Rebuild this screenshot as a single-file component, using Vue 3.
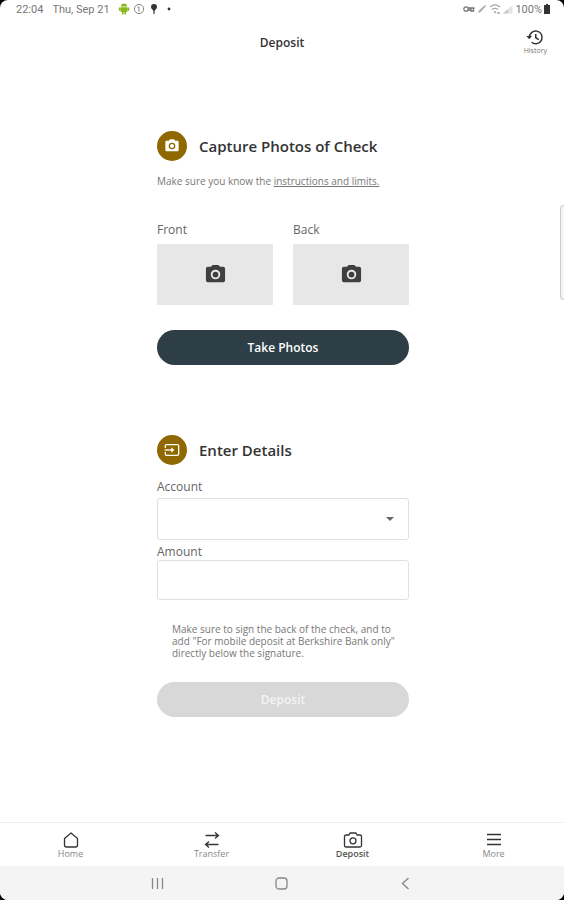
<script setup>
import { ref } from 'vue'

const account = ref('')
const amount = ref('')
const activeTab = ref('Deposit')
const tabs = ['Home', 'Transfer', 'Deposit', 'More']
const sides = ['Front', 'Back']
</script>

<template>
  <div class="screen">
    <div class="status-bar">
      <div class="status-group">
        <span>22:04</span>
        <span class="date">Thu, Sep 21</span>
        <svg class="status-icon" viewBox="0 0 12 12">
          <path d="M3 3.5a3 3 0 0 1 6 0zM2.800 4.200h6.400V9H2.800zM.8 4.400h1.800v3.400H.8zM9.400 4.400h1.800v3.400H9.400zM4 9h1.600v2.400H4zM6.400 9H8v2.400H6.400z" fill="#86b817" />
        </svg>
        <svg class="status-icon" viewBox="0 0 12 12" fill="none" stroke="#888">
          <circle cx="6" cy="6" r="4.600" />
          <path d="M4.500 4H6v4.500" />
        </svg>
        <svg class="status-icon" viewBox="0 0 12 12">
          <path d="M6 1a3 3 0 0 1 3 3c0 2-2 2.500-2.400 4v3H5.400V8C5 6.500 3 6 3 4a3 3 0 0 1 3-3z" fill="#333" />
        </svg>
        <svg class="status-icon" viewBox="0 0 12 12"><circle cx="6" cy="6" r="1.400" fill="#333" /></svg>
      </div>
      <div class="status-group status-right">
        <svg class="status-icon" viewBox="0 0 12 12" fill="none" stroke="#777" stroke-width="1.300">
          <circle cx="3" cy="6" r="2.200" />
          <path d="M5 5h6.500M5 7h3M8 5v3h2.500V5" />
        </svg>
        <svg class="status-icon" viewBox="0 0 12 12"><path d="M2 10l1-2.500L9 2l1 1-5.500 6z" fill="#aaa" /></svg>
        <svg class="status-icon" viewBox="0 0 12 12" fill="none" stroke="#aaa" stroke-width="1.300">
          <path d="M1 4c3-2.500 7-2.500 10 0M3 6.500c2-1.500 4-1.500 6 0M5 8.500l1 1 1-1M8 10h3" />
        </svg>
        <svg class="status-icon" viewBox="0 0 12 12"><path d="M1 10.500L10.500 2v8.500z" fill="#e4e4e4" /><path d="M1 10.500L6 6v4.500z" fill="#ccc" /></svg>
        <span>100%</span>
        <svg class="battery" viewBox="0 0 6 10"><path d="M2 0h2v1h2v9H0V1h2z" fill="#333" /></svg>
      </div>
    </div>

    <header class="top-bar">
      <h1>Deposit</h1>
      <button class="history" type="button">
        <svg viewBox="0 0 24 24" fill="none" stroke="#333" stroke-width="2">
          <path d="M4.500 13a8.500 8.500 0 1 1 3 6" />
          <path d="M13 8v5l4 2.500" />
          <path d="M0.500 10.500h7.500L4.300 15z" fill="#333" stroke="none" />
        </svg>
        <span>History</span>
      </button>
    </header>

    <main class="content">
      <section>
        <div class="section-head">
          <span class="badge">
            <svg viewBox="0 0 24 24">
              <path fill-rule="evenodd" d="M9 2L7.200 4H4a2 2 0 0 0-2 2v12a2 2 0 0 0 2 2h16a2 2 0 0 0 2-2V6a2 2 0 0 0-2-2h-3.200L15 2zm3 5a5 5 0 1 0 0 10 5 5 0 0 0 0-10zm0 2a3 3 0 1 1 0 6 3 3 0 0 1 0-6z" fill="#fff" />
            </svg>
          </span>
          <h2>Capture Photos of Check</h2>
        </div>
        <p class="hint">Make sure you know the <a href="#">instructions and limits.</a></p>
        <div class="photos">
          <div v-for="side in sides" :key="side" class="photo">
            <span :id="side" class="label">{{ side }}</span>
            <button class="photo-box" type="button" :aria-labelledby="side">
              <svg viewBox="0 0 24 24">
                <path fill-rule="evenodd" d="M9 2L7.200 4H4a2 2 0 0 0-2 2v12a2 2 0 0 0 2 2h16a2 2 0 0 0 2-2V6a2 2 0 0 0-2-2h-3.200L15 2zm3 5a5 5 0 1 0 0 10 5 5 0 0 0 0-10z" fill="#3f3f3f" />
                <circle cx="12" cy="12" r="3" fill="#3f3f3f" />
              </svg>
            </button>
          </div>
        </div>
        <button class="btn" type="button">Take Photos</button>
      </section>

      <section class="details">
        <div class="section-head">
          <span class="badge">
            <svg viewBox="0 0 24 24" fill="none" stroke="#fff" stroke-width="2">
              <path d="M2 9V6q0-2 2-2h16q2 0 2 2v12q0 2-2 2H4q-2 0-2-2v-3" />
              <path d="M1 12h12" />
              <path d="M11 8l4.500 4-4.500 4z" fill="#fff" stroke="none" />
            </svg>
          </span>
          <h2>Enter Details</h2>
        </div>
        <label class="label account-label" for="account">Account</label>
        <div class="select-wrap">
          <select id="account" v-model="account" class="field">
            <option value=""></option>
          </select>
          <svg class="caret" viewBox="0 0 8 4"><path d="M0 0h8L4 4z" fill="#666" /></svg>
        </div>
        <label class="label amount-label" for="amount">Amount</label>
        <input id="amount" v-model="amount" class="field amount" type="text">
        <p class="note">Make sure to sign the back of the check, and to add "For mobile deposit at Berkshire Bank only" directly below the signature.</p>
        <button class="btn" type="button" disabled>Deposit</button>
      </section>
    </main>

    <nav class="tabs">
      <button v-for="tab in tabs" :key="tab" type="button" :class="{ active: tab === activeTab }" @click="activeTab = tab">
        <svg viewBox="0 0 20 18" fill="none" stroke="#333" stroke-width="1.300">
          <path v-if="tab === 'Home'" d="M3.500 7.500L10 2l6.500 5.500V14q0 2-2 2h-9q-2 0-2-2z" stroke-linejoin="round" />
          <path v-if="tab === 'Transfer'" d="M3.500 4.500h13M13 1.500l3.500 3-3.500 3M16.500 13.500h-13M7 10.500l-3.500 3 3.500 3" />
          <template v-if="tab === 'Deposit'">
            <path d="M6 4l1-2h6l1 2h3q1.500 0 1.500 1.500v9q0 1.500-1.500 1.500H3q-1.500 0-1.500-1.500v-9Q1.500 4 3 4z" stroke-linejoin="round" />
            <circle cx="10" cy="9.800" r="3" />
          </template>
          <path v-if="tab === 'More'" d="M3 3.500h14M3 8.500h14M3 13.500h14" />
        </svg>
        <span>{{ tab }}</span>
      </button>
    </nav>

    <div class="system-bar">
      <button type="button" aria-label="Recent apps">
        <svg viewBox="0 0 14 14" fill="none" stroke="#888" stroke-width="1.300"><path d="M1.500 2v11M6.500 2v11M11.500 2v11" /></svg>
      </button>
      <button type="button" aria-label="Home screen">
        <svg viewBox="0 0 14 14" fill="none" stroke="#888" stroke-width="1.300"><rect x="1" y="2" width="11" height="11" rx="3" /></svg>
      </button>
      <button type="button" aria-label="Back">
        <svg viewBox="0 0 14 14" fill="none" stroke="#888" stroke-width="1.400"><path d="M9.500 2L3.500 7.500l6 5.500" /></svg>
      </button>
    </div>
    <div class="edge-handle"></div>
  </div>
</template>

<style>
body {
  background: #000;
}
</style>

<style scoped>
.screen {
  position: relative;
  display: flex;
  flex-direction: column;
  min-height: 100vh;
  overflow: hidden;
  border-radius: 8px;
  background: #fff;
  color: #333;
  font-family: "Open Sans", "Noto Sans", sans-serif;
}
button {
  border: 0;
  padding: 0;
  background: none;
  color: inherit;
  font-family: inherit;
  cursor: pointer;
}
h1,
h2,
p {
  margin: 0;
}
.status-bar {
  display: flex;
  justify-content: space-between;
  height: 18px;
  padding: 0 14px 0 16px;
  color: #777;
  font-family: Roboto, sans-serif;
  font-size: 11px;
}
.status-group {
  display: flex;
  align-items: center;
  gap: 3px;
}
.status-right {
  gap: 1px;
}
.status-right span {
  margin-right: 1px;
}
.date {
  margin: 0 5px 0 6px;
}
.status-icon {
  width: 12px;
  height: 12px;
}
.battery {
  width: 6px;
  height: 10px;
}
.top-bar {
  display: grid;
  grid-template-columns: 1fr auto 1fr;
  align-items: center;
  height: 48px;
  padding: 0 17px;
}
.top-bar h1 {
  grid-column: 2;
  font-size: 12px;
  font-weight: 600;
}
.history {
  display: flex;
  flex-direction: column;
  align-items: center;
  justify-self: end;
  font-size: 7px;
  line-height: 10px;
  color: #777;
}
.history svg {
  width: 18px;
  height: 18px;
}
.content {
  flex: 1;
  width: 252px;
  margin: 0 auto;
  padding: 65px 0 0 2px;
}
.section-head {
  display: flex;
  align-items: center;
  gap: 12px;
}
.section-head h2 {
  font-size: 15px;
  font-weight: 600;
  line-height: 30px;
  white-space: nowrap;
}
.badge {
  display: flex;
  align-items: center;
  justify-content: center;
  width: 30px;
  height: 30px;
  border-radius: 50%;
  background: #8f6800;
}
.badge svg {
  width: 16px;
  height: 16px;
}
.hint {
  margin-top: 13px;
  font-size: 10px;
  line-height: 14px;
  color: #777;
  white-space: nowrap;
}
.hint a {
  color: inherit;
}
.photos {
  display: grid;
  grid-template-columns: 1fr 1fr;
  gap: 20px;
  margin: 34px 0 25px;
}
.label {
  display: block;
  font-size: 12px;
  line-height: 16px;
  color: #666;
}
.photo-box {
  display: flex;
  align-items: center;
  justify-content: center;
  width: 100%;
  height: 61px;
  margin-top: 6px;
  background: #e7e7e7;
}
.photo-box svg {
  width: 23px;
  height: 23px;
}
.btn {
  display: block;
  width: 100%;
  height: 35px;
  border-radius: 18px;
  background: #2e3e47;
  color: #fff;
  font-size: 12px;
  font-weight: 600;
}
.btn:disabled {
  background: #d8d8d8;
  color: #f4f4f4;
  cursor: default;
}
.details {
  margin-top: 70px;
}
.account-label {
  margin: 14px 0 3px;
}
.select-wrap {
  position: relative;
}
.field {
  display: block;
  box-sizing: border-box;
  width: 100%;
  height: 42px;
  padding: 0 12px;
  border: 1px solid #e0e0e0;
  border-radius: 3px;
  background: #fff;
  color: #333;
  font-family: inherit;
  font-size: 12px;
  appearance: none;
}
.caret {
  position: absolute;
  top: 19px;
  right: 15px;
  width: 8px;
  height: 4px;
  pointer-events: none;
}
.amount-label {
  margin-top: 4px;
}
.amount {
  height: 40px;
}
.note {
  margin: 23px 0;
  padding: 0 8px 0 15px;
  font-size: 10px;
  line-height: 12px;
  color: #777;
}
.tabs {
  display: grid;
  grid-template-columns: repeat(4, 1fr);
  height: 43px;
  border-top: 1px solid #eee;
}
.tabs button {
  display: flex;
  flex-direction: column;
  align-items: center;
  justify-content: center;
  font-size: 9px;
  line-height: 10px;
  color: #888;
}
.tabs .active {
  color: #555;
  font-weight: 600;
}
.tabs svg {
  width: 20px;
  height: 18px;
}
.system-bar {
  display: flex;
  align-items: center;
  justify-content: center;
  gap: 110px;
  height: 34px;
  background: #f4f4f4;
}
.system-bar svg {
  display: block;
  width: 14px;
  height: 14px;
}
.edge-handle {
  position: absolute;
  top: 205px;
  right: 0;
  width: 4px;
  height: 95px;
  box-sizing: border-box;
  border: 1px solid #ccc;
  border-right: 0;
  border-radius: 4px 0 0 4px;
  background: #f4f4f4;
}
</style>
